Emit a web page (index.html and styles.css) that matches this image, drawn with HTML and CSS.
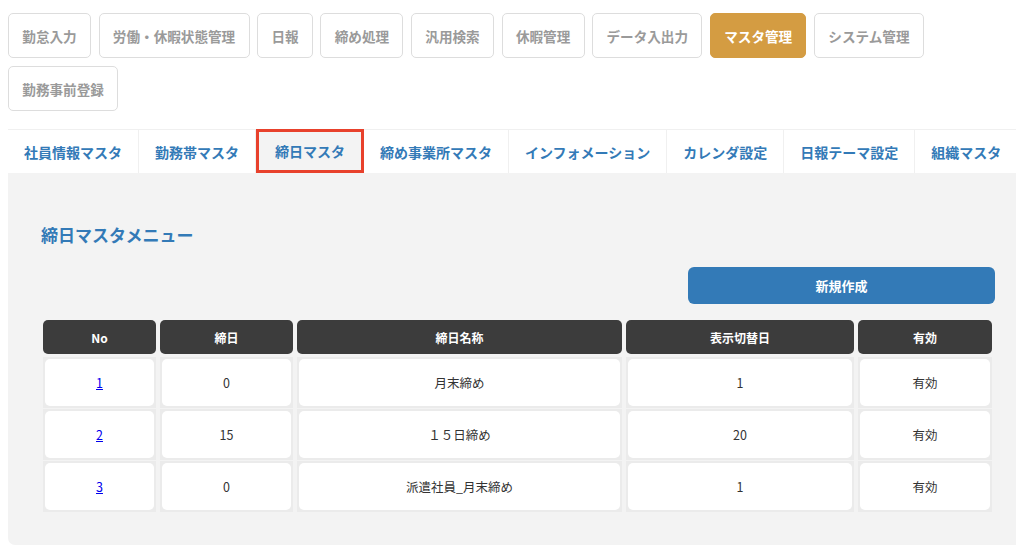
FILE: index.html
```html
<!DOCTYPE html>
<html lang="ja">
<head>
<meta charset="utf-8">
<title>締日マスタメニュー</title>
<link rel="stylesheet" href="styles.css">
</head>
<body>
<nav class="mainnav">
  <a class="nav-btn">勤怠入力</a>
  <a class="nav-btn">労働・休暇状態管理</a>
  <a class="nav-btn">日報</a>
  <a class="nav-btn">締め処理</a>
  <a class="nav-btn">汎用検索</a>
  <a class="nav-btn">休暇管理</a>
  <a class="nav-btn">データ入出力</a>
  <a class="nav-btn active">マスタ管理</a>
  <a class="nav-btn">システム管理</a>
  <a class="nav-btn">勤務事前登録</a>
</nav>
<div class="tabs">
  <a class="tab">社員情報マスタ</a>
  <a class="tab">勤務帯マスタ</a>
  <a class="tab current">締日マスタ</a>
  <a class="tab">締め事業所マスタ</a>
  <a class="tab">インフォメーション</a>
  <a class="tab">カレンダ設定</a>
  <a class="tab">日報テーマ設定</a>
  <a class="tab">組織マスタ</a>
</div>
<section class="panel">
  <h2 class="panel-title">締日マスタメニュー</h2>
  <div class="actions">
    <button class="btn-new">新規作成</button>
  </div>
  <div class="grid">
    <div class="th">No</div>
    <div class="th">締日</div>
    <div class="th">締日名称</div>
    <div class="th">表示切替日</div>
    <div class="th">有効</div>

    <div class="td"><div class="cell"><a class="link" href="#">1</a></div></div>
    <div class="td"><div class="cell">0</div></div>
    <div class="td"><div class="cell">月末締め</div></div>
    <div class="td"><div class="cell">1</div></div>
    <div class="td"><div class="cell">有効</div></div>

    <div class="td"><div class="cell"><a class="link" href="#">2</a></div></div>
    <div class="td"><div class="cell">15</div></div>
    <div class="td"><div class="cell">１５日締め</div></div>
    <div class="td"><div class="cell">20</div></div>
    <div class="td"><div class="cell">有効</div></div>

    <div class="td"><div class="cell"><a class="link" href="#">3</a></div></div>
    <div class="td"><div class="cell">0</div></div>
    <div class="td"><div class="cell">派遣社員_月末締め</div></div>
    <div class="td"><div class="cell">1</div></div>
    <div class="td"><div class="cell">有効</div></div>
  </div>
</section>
</body>
</html>
```
FILE: styles.css
```css
html, body {
  margin: 0;
  padding: 0;
  background: #ffffff;
}
body {
  margin: 8px;
  font-family: "Noto Sans CJK JP", "Noto Sans", sans-serif;
  color: #333333;
  overflow: hidden;
}
.mainnav {
  display: flex;
  flex-wrap: wrap;
  gap: 8px 7.6px;
  padding-top: 5px;
  width: 940px;
}
.nav-btn {
  display: flex;
  align-items: center;
  justify-content: center;
  height: 43px;
  padding: 0 13.3px;
  border: 1px solid #dddddd;
  border-radius: 5px;
  background: #ffffff;
  color: #9a9a9a;
  font-weight: 700;
  font-size: 13.6px;
  white-space: nowrap;
}
.nav-btn.active {
  background: #d49c42;
  border-color: #d49c42;
  color: #ffffff;
}
.tabs {
  display: flex;
  margin-top: 18px;
  border-top: 1px solid #f0f0f0;
  width: 1012px;
}
.tab {
  flex: none;
  display: flex;
  align-items: center;
  justify-content: center;
  height: 43px;
  padding: 0 16px;
  border-right: 1px solid #f0f0f0;
  color: #337ab7;
  font-weight: 700;
  font-size: 14px;
  white-space: nowrap;
}
.tab.current {
  background: #f3f3f3;
  border: 3px solid #e8412c;
  height: 38px;
  margin-top: -1px;
  padding: 0 16px;
}
.panel {
  background: #f3f3f3;
  margin-right: -8px;
  border-radius: 0 0 0 7px;
  padding: 52px 29px 33px 33px;
}
.panel-title {
  margin: 0;
  color: #337ab7;
  font-size: 17px;
  font-weight: 700;
  line-height: 20px;
}
.actions {
  display: flex;
  justify-content: flex-end;
  margin-top: 22px;
  width: 954px;
}
.btn-new {
  width: 307px;
  height: 37px;
  border: none;
  border-radius: 6px;
  background: #337ab7;
  color: #ffffff;
  font-family: "Noto Sans CJK JP", "Noto Sans", sans-serif;
  font-weight: 700;
  font-size: 13px;
}
.grid {
  display: grid;
  grid-template-columns: 113px 133px 325px 228px 134px;
  column-gap: 4px;
  row-gap: 1px;
  margin-top: 16px;
  margin-left: 2px;
  width: 949px;
}
.th {
  display: flex;
  align-items: center;
  justify-content: center;
  height: 34px;
  margin-bottom: 2px;
  background: #3c3c3c;
  border-radius: 5px;
  color: #ffffff;
  font-weight: 700;
  font-size: 12px;
}
.td {
  background: #ebebeb;
  padding: 2px;
  height: 47px;
}
.cell {
  display: flex;
  align-items: center;
  justify-content: center;
  height: 100%;
  background: #ffffff;
  border-radius: 5px;
  font-size: 12.5px;
  color: #333333;
}
.link {
  color: #0000ee;
  text-decoration: underline;
}
```
